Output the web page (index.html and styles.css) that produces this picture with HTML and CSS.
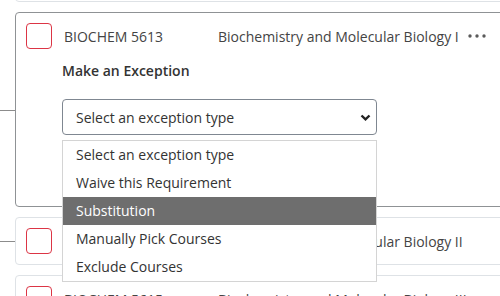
FILE: index.html
```html
<!DOCTYPE html>
<html lang="en">
<head>
    <meta charset="UTF-8">
    <meta name="viewport" content="width=device-width, initial-scale=1.0">
    <title>Course Requirements - Exceptions</title>
    <link rel="stylesheet" href="styles.css">
</head>
<body>
    <div class="course-list">
        <div class="course-card">
            <div class="course-row">
                <span class="check"></span>
                <span class="course-code">BIOCHEM 5612</span>
                <span class="course-title">Biochemistry and Molecular Biology</span>
            </div>
        </div>

        <div class="course-card open">
            <div class="course-row">
                <span class="check"></span>
                <span class="course-code">BIOCHEM 5613</span>
                <span class="course-title">Biochemistry and Molecular Biology I</span>
                <button class="more" aria-label="More options">
                    <svg width="18" height="4" viewBox="0 0 18 4"><circle cx="2" cy="2" r="1.7"/><circle cx="9" cy="2" r="1.7"/><circle cx="16" cy="2" r="1.7"/></svg>
                </button>
            </div>
            <div class="exception">
                <div class="exception-label">Make an Exception</div>
                <div class="select-wrap">
                    <div class="select-box">
                        <span>Select an exception type</span>
                        <svg class="chevron" width="11" height="7" viewBox="0 0 11 7"><polyline points="1.5,1.5 5.5,5.3 9.5,1.5"/></svg>
                    </div>
                    <ul class="select-menu">
                        <li>Select an exception type</li>
                        <li>Waive this Requirement</li>
                        <li class="hover">Substitution</li>
                        <li>Manually Pick Courses</li>
                        <li>Exclude Courses</li>
                    </ul>
                </div>
            </div>
        </div>

        <div class="course-card">
            <div class="course-row">
                <span class="check"></span>
                <span class="course-code">BIOCHEM 5614</span>
                <span class="course-title">Biochemistry and Molecular Biology II</span>
            </div>
        </div>

        <div class="course-card">
            <div class="course-row">
                <span class="check"></span>
                <span class="course-code">BIOCHEM 5615</span>
                <span class="course-title">Biochemistry and Molecular Biology III</span>
            </div>
        </div>
    </div>
</body>
</html>
```

FILE: styles.css
```css
body {
    font-family: "Open Sans", Arial, sans-serif;
    margin: 0;
    background-color: white;
    color: #333;
    overflow: hidden;
    height: 296px;
}
.course-list {
    width: 560px;
    margin-top: -46px;
    padding-left: 15px;
    display: flex;
    flex-direction: column;
    gap: 10px;
}
.course-card {
    position: relative;
    border: 1px solid #dee2e6;
    border-radius: 4px;
    padding: 10px;
}
.course-card::before {
    content: "";
    position: absolute;
    left: -16px;
    top: 50%;
    width: 15px;
    height: 1px;
    background-color: #8c8c8c;
}
.course-card.open {
    border-color: #8f9295;
}
.course-row {
    display: flex;
    align-items: center;
    height: 26px;
    font-size: 14px;
    color: #444;
}
.check {
    width: 24px;
    height: 24px;
    border: 1px solid #dc3545;
    border-radius: 4px;
    flex-shrink: 0;
}
.course-code {
    width: 154px;
    margin-left: 12px;
}
.course-title {
    width: 250px;
    white-space: nowrap;
}
.more {
    background: none;
    border: none;
    padding: 0;
    width: 18px;
    height: 18px;
    display: flex;
    align-items: center;
    fill: #5a5a5a;
    cursor: pointer;
}
.exception {
    margin-left: 36px;
    padding-bottom: 61px;
}
.exception-label {
    margin-top: 12px;
    font-size: 14px;
    font-weight: 600;
    line-height: 20px;
    color: #333;
}
.select-wrap {
    position: relative;
    width: 315px;
    margin-top: 18px;
}
.select-box {
    height: 34px;
    border: 1px solid #7f8791;
    border-radius: 4px;
    padding: 0 5px 0 13px;
    display: flex;
    align-items: center;
    justify-content: space-between;
    font-size: 14px;
    color: #333;
}
.chevron {
    fill: none;
    stroke: #222;
    stroke-width: 2.4;
}
.select-menu {
    position: absolute;
    top: 41px;
    left: 0;
    width: 313px;
    margin: 0;
    padding: 0;
    list-style: none;
    background-color: white;
    border: 1px solid #d4d4d4;
    z-index: 2;
}
.select-menu li {
    height: 28px;
    line-height: 28px;
    padding-left: 13px;
    font-size: 14px;
    color: #333;
}
.select-menu li.hover {
    background-color: #6e6e6e;
    color: white;
}
```
